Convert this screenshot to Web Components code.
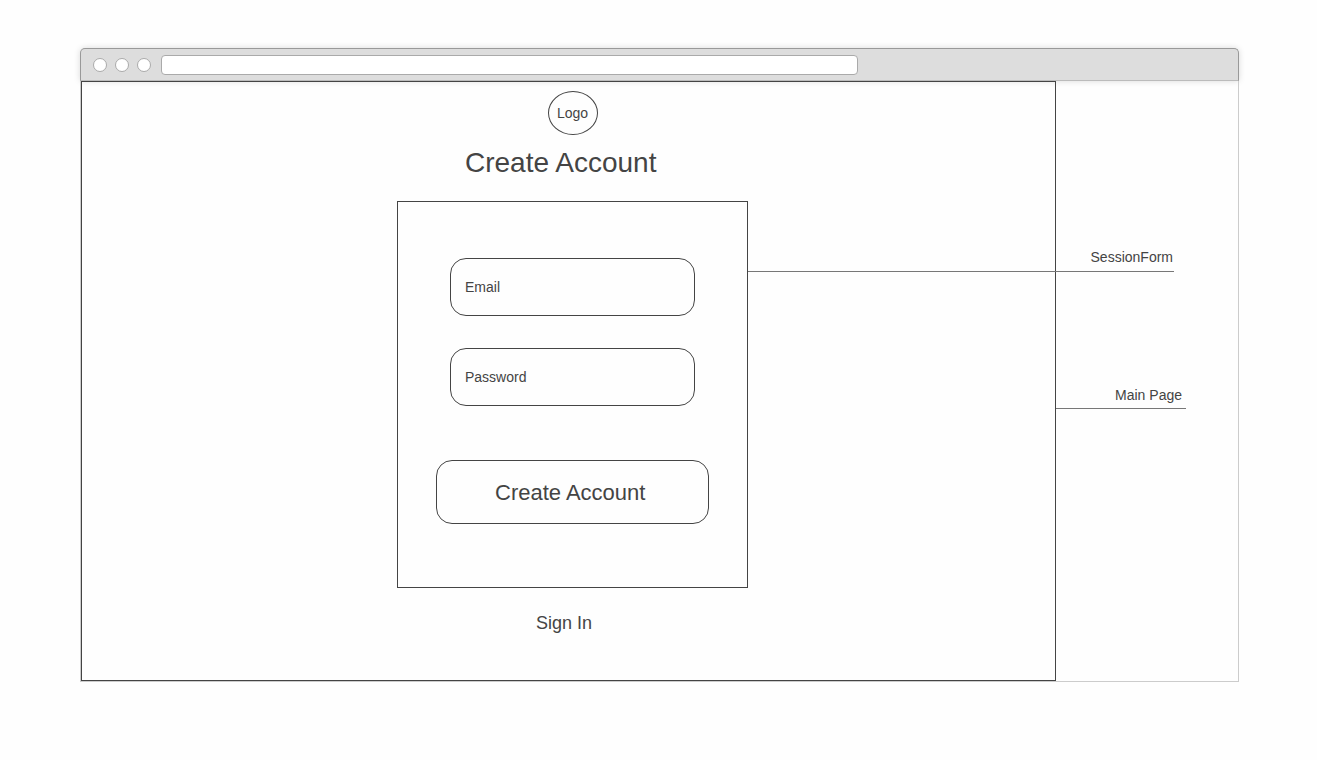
<!DOCTYPE html>
<html lang="en">
<head>
<meta charset="utf-8">
<meta name="viewport" content="width=device-width, initial-scale=1">
<title>Create Account wireframe</title>
<style>
  body {
    margin: 0;
    padding: 48px 78px 48px 80px;
    background: #fefefe;
    color: #444;
    font: 14px/16px "Liberation Sans", Arial, sans-serif;
    --ink: #444;
  }
</style>
</head>
<body>
<browser-window>
  <main-page>
    <logo-mark slot="logo">Logo</logo-mark>
    <span slot="title">Create Account</span>
    <session-form action-label="Create Account">
      <text-field label="Email" type="email"></text-field>
      <text-field label="Password" type="password"></text-field>
    </session-form>
    <nav-link slot="footer" href="#sign-in">Sign In</nav-link>
  </main-page>
  <call-out slot="notes" class="page-note">Main Page</call-out>
  <call-out slot="overlay" class="form-note">SessionForm</call-out>
</browser-window>

<script>
  const define = (name, html, setup) => {
    const template = document.createElement('template');
    template.innerHTML = html;
    customElements.define(name, class extends HTMLElement {
      constructor() {
        super();
        this.attachShadow({ mode: 'open' }).append(template.content.cloneNode(true));
      }
      connectedCallback() {
        if (setup) setup(this, this.shadowRoot);
      }
    });
  };

  define('browser-window', `
    <style>
      :host { display: block; }
      .stage {
        position: relative;
        display: grid;
        grid-template-columns: minmax(0, 1fr) 182px;
        border: 1px solid #ccc;
        border-top: 0;
      }
      aside { padding: 306px 52px 0 0; }
      ::slotted(.page-note) { --drop: 5px; }
      /* The form's callout runs over the page frame to the form's edge. */
      ::slotted(.form-note) {
        position: absolute;
        top: 168px;
        right: 64px;
        left: calc(50% + 88px);
        --inset: 1px;
      }
    </style>
    <window-bar></window-bar>
    <div class="stage">
      <slot></slot>
      <aside><slot name="notes"></slot></aside>
      <slot name="overlay"></slot>
    </div>
  `);

  define('window-bar', `
    <style>
      :host {
        box-sizing: border-box;
        display: flex;
        align-items: center;
        gap: 8px;
        height: 33px;
        padding: 0 380px 0 12px;
        background: #ddd;
        border: 1px solid #999;
        border-bottom-color: #bbb;
        border-radius: 5px 5px 0 0;
        box-shadow: 0 0 6px rgba(0, 0, 0, .15);
      }
      i, input {
        box-sizing: border-box;
        background: #fff;
        border: 1px solid #aaa;
      }
      i { flex: none; width: 14px; height: 14px; border-radius: 50%; }
      input {
        flex: 1;
        min-width: 0;
        height: 20px;
        margin: 0 0 0 2px;
        padding: 0 6px;
        border-radius: 4px;
        font: inherit;
        outline: 0;
      }
    </style>
    <i></i><i></i><i></i>
    <input type="text" aria-label="Address">
  `);

  define('main-page', `
    <style>
      :host { display: block; border: 1px solid var(--ink); }
      main {
        display: flex;
        flex-direction: column;
        align-items: center;
        padding: 9px 0 47px 8px;
      }
      h1 {
        box-sizing: border-box;
        width: 351px;
        margin: 12px 0 22px;
        padding-left: 68px;
        font-size: 28px;
        line-height: 32px;
        font-weight: 400;
      }
      footer {
        box-sizing: border-box;
        width: 351px;
        margin-top: 25px;
        padding-left: 139px;
      }
    </style>
    <main>
      <slot name="logo"></slot>
      <h1><slot name="title"></slot></h1>
      <slot></slot>
      <footer><slot name="footer"></slot></footer>
    </main>
  `);

  define('logo-mark', `
    <style>
      :host {
        box-sizing: border-box;
        display: grid;
        place-items: center;
        width: 50px;
        height: 44px;
        border: 1px solid var(--ink);
        border-radius: 50%;
      }
    </style>
    <slot></slot>
  `);

  define('session-form', `
    <style>
      :host {
        box-sizing: border-box;
        display: block;
        width: 351px;
        padding: 56px 38px 63px;
        border: 1px solid var(--ink);
      }
      .fields { display: grid; gap: 32px; padding: 0 14px; }
      button {
        box-sizing: border-box;
        display: block;
        width: 100%;
        height: 64px;
        margin: 54px 0 0;
        padding: 2px 0 0 58px;
        background: none;
        border: 1px solid var(--ink);
        border-radius: 16px;
        color: inherit;
        font: inherit;
        font-size: 22px;
        text-align: left;
      }
    </style>
    <form>
      <div class="fields"><slot></slot></div>
      <button type="button"></button>
    </form>
  `, (host, root) => {
    root.querySelector('button').textContent = host.getAttribute('action-label');
  });

  define('text-field', `
    <style>
      :host { display: block; }
      input {
        box-sizing: border-box;
        display: block;
        width: 100%;
        height: 58px;
        margin: 0;
        padding: 0 14px;
        background: none;
        border: 1px solid var(--ink);
        border-radius: 16px;
        color: inherit;
        font: inherit;
      }
      input::placeholder { color: var(--ink); opacity: 1; }
    </style>
    <input>
  `, (host, root) => {
    const input = root.querySelector('input');
    const label = host.getAttribute('label');
    input.type = host.getAttribute('type');
    input.placeholder = label;
    input.setAttribute('aria-label', label);
  });

  define('nav-link', `
    <style>
      :host { display: block; font-size: 18px; line-height: 20px; }
      a { color: inherit; text-decoration: none; }
    </style>
    <a><slot></slot></a>
  `, (host, root) => {
    root.querySelector('a').href = host.getAttribute('href');
  });

  define('call-out', `
    <style>
      :host {
        display: block;
        padding: 0 var(--inset, 4px) var(--drop, 6px) 0;
        border-bottom: 1px solid #777;
        text-align: right;
      }
    </style>
    <slot></slot>
  `);
</script>
</body>
</html>
